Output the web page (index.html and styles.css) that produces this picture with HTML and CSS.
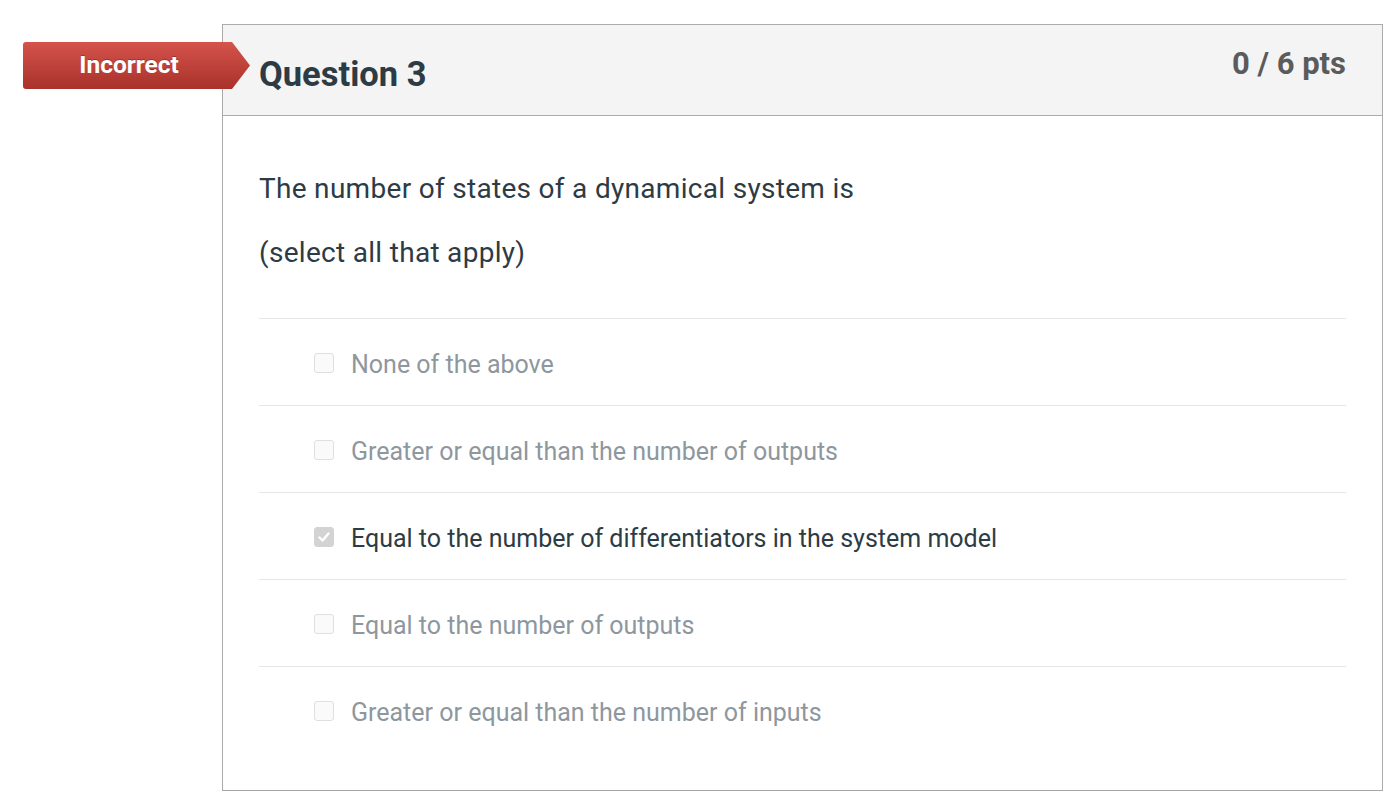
FILE: index.html
```html
<!DOCTYPE html>
<html lang="en">
<head>
<meta charset="utf-8">
<title>Question 3</title>
<link rel="stylesheet" href="styles.css">
</head>
<body>
<div class="page">
  <div class="badge">Incorrect</div>
  <div class="quiz">
    <div class="quiz-header">
      <h2 class="quiz-title">Question 3</h2>
      <div class="quiz-points">0 / 6 pts</div>
    </div>
    <div class="quiz-body">
      <p class="q-text">The number of states of a dynamical system is</p>
      <p class="q-text">(select all that apply)</p>
      <div class="answers">
        <div class="answer">
          <span class="box"></span>
          <span class="label">None of the above</span>
        </div>
        <div class="answer">
          <span class="box"></span>
          <span class="label">Greater or equal than the number of outputs</span>
        </div>
        <div class="answer selected">
          <span class="box checked">
            <svg width="14" height="14" viewBox="0 0 14 14"><path d="M2.5 7.5 L5.6 10.5 L11.5 3.5" fill="none" stroke="#fff" stroke-width="2.4" stroke-linecap="round" stroke-linejoin="round"/></svg>
          </span>
          <span class="label">Equal to the number of differentiators in the system model</span>
        </div>
        <div class="answer">
          <span class="box"></span>
          <span class="label">Equal to the number of outputs</span>
        </div>
        <div class="answer">
          <span class="box"></span>
          <span class="label">Greater or equal than the number of inputs</span>
        </div>
      </div>
    </div>
  </div>
</div>
</body>
</html>
```

FILE: styles.css
```css
html, body {
  margin: 0;
  padding: 0;
  background: #fff;
  font-family: Roboto, "Liberation Sans", Arial, sans-serif;
  color: #2d3b45;
}

.page {
  position: relative;
  padding: 24px 0 0 222px;
}

.badge {
  position: absolute;
  left: 23px;
  top: 42px;
  width: 227px;
  height: 47px;
  box-sizing: border-box;
  padding-right: 15px;
  background: linear-gradient(#d5534b, #a8322b);
  clip-path: polygon(0 0, 209px 0, 227px 50%, 209px 100%, 0 100%);
  border-radius: 3px 0 0 3px;
  color: #fff;
  font-weight: 700;
  font-size: 24.5px;
  line-height: 46px;
  text-align: center;
  text-shadow: 0 -1px 0 rgba(0,0,0,0.25);
  z-index: 2;
}

.quiz {
  width: 1161px;
  box-sizing: border-box;
  border: 1px solid #ababab;
  border-bottom-color: #a5a5a5;
}

.quiz-header {
  display: flex;
  justify-content: space-between;
  align-items: flex-start;
  height: 90px;
  padding: 0 36px;
  background: #f4f4f4;
  border-bottom: 1px solid #ababab;
}

.quiz-title {
  margin: 0;
  padding-top: 29px;
  font-size: 34.5px;
  line-height: 40px;
  font-weight: 700;
  color: #2d3b45;
}

.quiz-points {
  padding-top: 20px;
  font-size: 31px;
  line-height: 38px;
  font-weight: 700;
  color: #5b5b5b;
}

.quiz-body {
  padding: 55px 36px 37px;
}

.q-text {
  margin: 0 0 28px;
  font-size: 28px;
  letter-spacing: 0.3px;
  line-height: 36px;
  color: #2d3b45;
}

.answers {
  margin-top: 47px;
}

.answer {
  display: flex;
  align-items: center;
  height: 87px;
  border-top: 1px solid #e6e6e6;
  padding-left: 55px;
  padding-top: 5px;
  box-sizing: border-box;
}

.box {
  width: 20px;
  height: 20px;
  box-sizing: border-box;
  border: 1px solid #e0e0e0;
  border-radius: 3px;
  background: #fafafa;
  margin-right: 17px;
  margin-top: -4px;
  display: flex;
  align-items: center;
  justify-content: center;
}

.box.checked {
  background: #d3d3d3;
  border-color: #d3d3d3;
}

.label {
  font-size: 25px;
  line-height: 30px;
  color: #8e979e;
}

.answer.selected .label {
  color: #2d3b45;
}
```
